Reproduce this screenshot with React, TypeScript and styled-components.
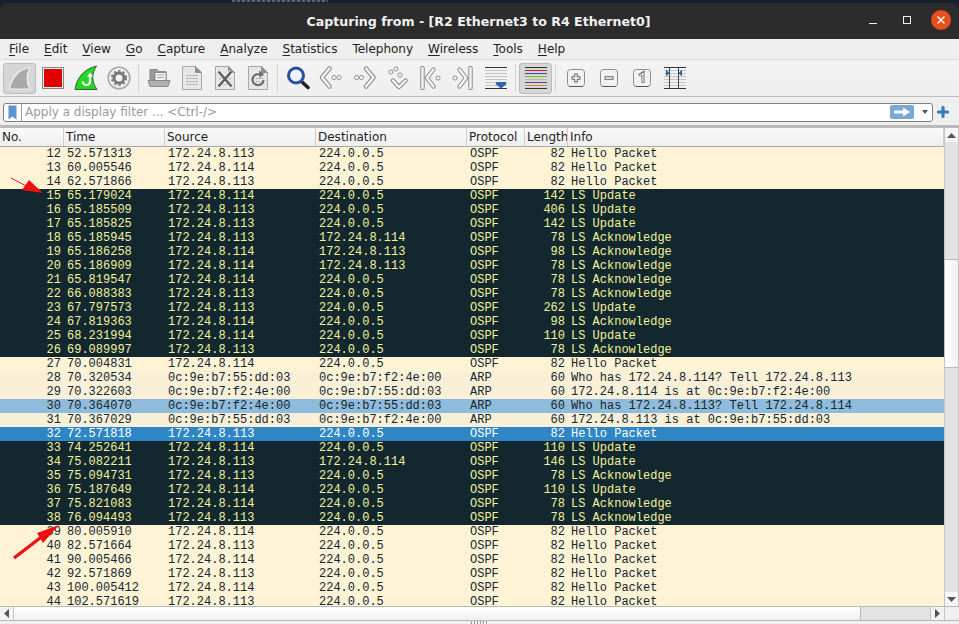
import React from "react";
import styled, { createGlobalStyle } from "styled-components";

const Global = createGlobalStyle`
  html, body { margin: 0; padding: 0; height: 100%; overflow: hidden; background: #f0f0f0; }
  #root { height: 100%; }
`;

const Window = styled.div`
  width: 959px;
  height: 624px;
  display: flex;
  flex-direction: column;
  overflow: hidden;
  position: relative;
  background: #efefef;
  font-family: "DejaVu Sans", sans-serif;
  color: #2e2e2e;
`;

const TitleStrip = styled.header`
  height: 39px;
  flex: none;
  box-sizing: border-box;
  padding-top: 3px;
  display: flex;
  background: #1a1f2e;
  position: relative;
`;

const BehindText = styled.div`
  position: absolute;
  left: 232px;
  top: 0;
  width: 96px;
  height: 2px;
  background: repeating-linear-gradient(90deg, #5d6272 0 3px, #2a2f3e 3px 5px);
`;

const TitleInner = styled.div`
  flex: 1;
  display: flex;
  align-items: center;
  justify-content: center;
  background: #2c2c2c;
  border-radius: 8px 8px 0 0;
`;

const Title = styled.div`
  font-weight: 700;
  font-size: 12.6px;
  color: #f2f2f2;
  margin-top: 1px;
  position: relative;
  left: -1px;
`;

const WinControls = styled.div`
  position: absolute;
  right: 8px;
  top: 10px;
  display: flex;
  align-items: center;
  gap: 14px;
`;

const WinButton = styled.div`
  width: 20px;
  height: 20px;
  display: flex;
  align-items: center;
  justify-content: center;
`;

const CloseButton = styled(WinButton)`
  background: #e6501f;
  border-radius: 50%;
`;

const MenuBar = styled.nav`
  height: 20px;
  flex: none;
  display: flex;
  align-items: center;
  padding-left: 9px;
  gap: 15px;
  background: #efefef;
  font-size: 12px;
  color: #222;
`;

const MenuItem = styled.span`
  & > u { text-underline-offset: 2px; text-decoration-thickness: 1px; }
`;

const ToolBar = styled.div`
  height: 38px;
  flex: none;
  box-sizing: border-box;
  display: flex;
  align-items: center;
  padding-left: 3px;
  background: linear-gradient(#f3f3f3, #efefef);
  border-top: 1px solid #dcdcdc;
  border-bottom: 1px solid #bdbdbd;
`;

const ToolButton = styled.div<{ $on?: boolean }>`
  width: 33px;
  height: 31px;
  flex: none;
  box-sizing: border-box;
  display: flex;
  align-items: center;
  justify-content: center;
  border-radius: 3px;
  background: ${(p) => (p.$on ? "#d6d6d6" : "transparent")};
  border: 1px solid ${(p) => (p.$on ? "#bcbcbc" : "transparent")};
`;

const ToolSep = styled.div`
  width: 1px;
  height: 28px;
  margin: 0 3px;
  flex: none;
  background: #d3d3d3;
`;

const FilterRow = styled.div`
  height: 28px;
  flex: none;
  box-sizing: border-box;
  display: flex;
  align-items: center;
  padding: 0 10px 0 3px;
  background: #efefef;
  gap: 4px;
`;

const FilterBox = styled.div`
  flex: 1;
  height: 19px;
  box-sizing: border-box;
  display: flex;
  align-items: center;
  background: #fff;
  border: 1px solid #7f7f7f;
  border-radius: 3px;
  margin-top: 2px;
`;

const Bookmark = styled.div`
  width: 18px;
  height: 100%;
  flex: none;
  box-sizing: border-box;
  border-right: 1px solid #9a9a9a;
  display: flex;
  align-items: center;
  justify-content: center;
`;

const FilterHint = styled.div`
  flex: 1;
  font-size: 12px;
  padding-left: 3px;
  color: #9b9b9b;
`;

const ApplyArrow = styled.div`
  width: 24px;
  height: 14px;
  border-radius: 2px;
  background: #7ba7d6;
  display: flex;
  align-items: center;
  justify-content: center;
`;

const DropCaret = styled.div`
  width: 0;
  height: 0;
  margin: 0 4px 0 8px;
  border-left: 3.5px solid transparent;
  border-right: 3.5px solid transparent;
  border-top: 4px solid #555;
`;

const AddFilter = styled.svg`
  margin-top: 2px;
  flex: none;
`;

const Frame = styled.div`
  height: 496px;
  flex: none;
  box-sizing: border-box;
  border-top: 3px solid #b9b9b9;
  display: grid;
  grid-template-columns: 944px 15px;
  grid-template-rows: 1fr 14px;
  border-bottom: 1px solid #b9b9b9;
`;

const Main = styled.div`
  display: flex;
  flex-direction: column;
  overflow: hidden;
  min-height: 0;
`;

const HeaderRow = styled.div`
  height: 19px;
  flex: none;
  box-sizing: border-box;
  display: grid;
  grid-template-columns: 64px 101px 151px 151px 58px 43px 1fr;
  background: linear-gradient(#fbfbfb, #eeeeee);
  border-bottom: 1px solid #a8a8a8;
  font-size: 12px;
  color: #1f1f1f;
`;

const HeaderCell = styled.div`
  box-sizing: border-box;
  padding-left: 2px;
  line-height: 18px;
  border-right: 1px solid #cfcfcf;
  white-space: nowrap;
  overflow: hidden;
`;

const Rows = styled.div`
  flex: 1;
  overflow: hidden;
  min-height: 0;
`;

const Row = styled.div<{ $bg: string; $fg: string }>`
  height: 14px;
  display: grid;
  grid-template-columns: 64px 101px 151px 151px 58px 43px 1fr;
  background: ${(p) => p.$bg};
  color: ${(p) => p.$fg};
  font-family: "Liberation Mono", monospace;
  font-size: 12px;
  line-height: 14px;
  white-space: pre;
`;

const Cell = styled.div`
  padding-left: 3px;
  overflow: hidden;
`;

const NumCell = styled.div`
  padding-right: 3px;
  text-align: right;
  overflow: hidden;
`;

const VScroll = styled.div`
  grid-row: 1 / 2;
  grid-column: 2;
  display: flex;
  flex-direction: column;
  background: #e3e3e3;
  border-left: 1px solid #c4c4c4;
  border-right: 1px solid #c4c4c4;
  min-height: 0;
`;

const ScrollBtn = styled.div`
  height: 14px;
  flex: none;
  background: #f6f6f6;
  display: flex;
  align-items: center;
  justify-content: center;
`;

const VTrack = styled.div<{ $h: number }>`
  height: ${(p) => p.$h}px;
  flex: none;
  background: #e3e3e3;
`;

const VThumb = styled.div<{ $h: number }>`
  height: ${(p) => p.$h}px;
  flex: none;
  box-sizing: border-box;
  background: linear-gradient(90deg, #ffffff, #f1f1f1);
  border-top: 1px solid #b9b9b9;
  border-bottom: 1px solid #b9b9b9;
`;

const VFill = styled.div`
  flex: 1;
  background: #e3e3e3;
`;

const HScroll = styled.div`
  grid-row: 2;
  grid-column: 1;
  display: flex;
  background: #e3e3e3;
  border-top: 1px solid #b9b9b9;
`;

const HBtn = styled.div`
  width: 13px;
  flex: none;
  background: #f4f4f4;
  display: flex;
  align-items: center;
  justify-content: center;
  border-right: 1px solid #c4c4c4;
`;

const HThumb = styled.div`
  width: 846px;
  flex: none;
  background: linear-gradient(#ffffff, #f0f0f0);
  border-right: 1px solid #b9b9b9;
`;

const HFill = styled.div`
  flex: 1;
`;

const HBtnEnd = styled(HBtn)`
  border-right: none;
  border-left: 1px solid #c4c4c4;
`;

const Corner = styled.div`
  grid-row: 2;
  grid-column: 2;
  background: #efefef;
  border-top: 1px solid #b9b9b9;
  border-left: 1px solid #c4c4c4;
`;

const ArrowOverlay = styled.svg`
  position: absolute;
  left: 0;
  top: 0;
  pointer-events: none;
`;

const Grip = styled.div`
  position: absolute;
  left: 471px;
  bottom: 0;
  width: 17px;
  height: 3px;
  background: repeating-linear-gradient(90deg, #9a9a9a 0 1px, transparent 1px 3px);
`;

type Kind = "o" | "d" | "a" | "b" | "s";
const palette: Record<Kind, [string, string]> = {
  o: ["#fff3d6", "#12272e"],
  d: ["#12272e", "#f4f29a"],
  a: ["#faf0d7", "#12272e"],
  b: ["#8fbbdc", "#12272e"],
  s: ["#2e86c4", "#ffffff"],
};

const A = "172.24.8.113";
const B = "172.24.8.114";
const M = "224.0.0.5";
const H = "Hello Packet";
const U = "LS Update";
const K = "LS Acknowledge";
const X = "0c:9e:b7:55:dd:03";
const Y = "0c:9e:b7:f2:4e:00";

const data: [number, string, string, string, string, number, string, Kind][] = [
  [12, "52.571313", A, M, "OSPF", 82, H, "o"],
  [13, "60.005546", B, M, "OSPF", 82, H, "o"],
  [14, "62.571866", A, M, "OSPF", 82, H, "o"],
  [15, "65.179024", B, M, "OSPF", 142, U, "d"],
  [16, "65.185509", A, M, "OSPF", 406, U, "d"],
  [17, "65.185825", A, M, "OSPF", 142, U, "d"],
  [18, "65.185945", A, B, "OSPF", 78, K, "d"],
  [19, "65.186258", B, A, "OSPF", 98, K, "d"],
  [20, "65.186909", B, A, "OSPF", 78, K, "d"],
  [21, "65.819547", B, M, "OSPF", 78, K, "d"],
  [22, "66.088383", A, M, "OSPF", 78, K, "d"],
  [23, "67.797573", A, M, "OSPF", 262, U, "d"],
  [24, "67.819363", B, M, "OSPF", 98, K, "d"],
  [25, "68.231994", B, M, "OSPF", 110, U, "d"],
  [26, "69.089997", A, M, "OSPF", 78, K, "d"],
  [27, "70.004831", B, M, "OSPF", 82, H, "o"],
  [28, "70.320534", X, Y, "ARP", 60, "Who has 172.24.8.114? Tell 172.24.8.113", "a"],
  [29, "70.322603", Y, X, "ARP", 60, "172.24.8.114 is at 0c:9e:b7:f2:4e:00", "a"],
  [30, "70.364070", Y, X, "ARP", 60, "Who has 172.24.8.113? Tell 172.24.8.114", "b"],
  [31, "70.367029", X, Y, "ARP", 60, "172.24.8.113 is at 0c:9e:b7:55:dd:03", "a"],
  [32, "72.571818", A, M, "OSPF", 82, H, "s"],
  [33, "74.252641", B, M, "OSPF", 110, U, "d"],
  [34, "75.082211", A, B, "OSPF", 146, U, "d"],
  [35, "75.094731", A, M, "OSPF", 78, K, "d"],
  [36, "75.187649", B, M, "OSPF", 110, U, "d"],
  [37, "75.821083", B, M, "OSPF", 78, K, "d"],
  [38, "76.094493", A, M, "OSPF", 78, K, "d"],
  [39, "80.005910", B, M, "OSPF", 82, H, "o"],
  [40, "82.571664", A, M, "OSPF", 82, H, "o"],
  [41, "90.005466", B, M, "OSPF", 82, H, "o"],
  [42, "92.571869", A, M, "OSPF", 82, H, "o"],
  [43, "100.005412", B, M, "OSPF", 82, H, "o"],
  [44, "102.571619", A, M, "OSPF", 82, H, "o"],
];

const menus: [string, string][] = [
  ["F", "ile"], ["E", "dit"], ["V", "iew"], ["G", "o"], ["C", "apture"], ["A", "nalyze"],
  ["S", "tatistics"], ["", "Telephony"], ["W", "ireless"], ["T", "ools"], ["H", "elp"],
];

const Doc = ({ children }: { children?: React.ReactNode }) => (
  <svg width="22" height="26" viewBox="0 0 22 26">
    <path d="M1.5 1.5H14.5L20.5 7.5V24.5H1.5Z" fill="#e6e6e6" stroke="#a8a8a8" />
    <path d="M14.5 1.5V7.5H20.5Z" fill="#8f8f8f" stroke="#8f8f8f" />
    {[10.5, 13.5, 16.5, 19.5].map((y) => (
      <path key={y} d={`M5.5 ${y}H16.5`} stroke="#a0a0a0" strokeDasharray="2 1" />
    ))}
    {children}
  </svg>
);

const Band = ({ d }: { d: string }) => (
  <>
    <path d={d} fill="none" stroke="#8a8a8a" strokeWidth="4.4" strokeLinejoin="round" strokeLinecap="round" />
    <path d={d} fill="none" stroke="#f6f6f6" strokeWidth="2.4" strokeLinejoin="round" strokeLinecap="round" />
  </>
);

const Dots = ({ pts }: { pts: [number, number][] }) => (
  <>
    {pts.map(([x, y]) => (
      <circle key={`${x}-${y}`} cx={x} cy={y} r="2.1" fill="#f4f4f4" stroke="#929292" />
    ))}
  </>
);

const Boxed = ({ children }: { children: React.ReactNode }) => (
  <svg width="20" height="20" viewBox="0 0 20 20">
    <rect x="1.5" y="1.5" width="17" height="17" rx="3" fill="#f2f2f2" stroke="#8c8c8c" />
    <path d="M3.5 18.5h13" stroke="#555" />
    {children}
  </svg>
);

const Lines = ({ children }: { children?: React.ReactNode }) => (
  <svg width="24" height="24" viewBox="0 0 24 24">
    <path d="M1 1.5H23M1 22.5H23" stroke="#333" />
    <path d="M1 4.5H23M1 7.5H23M1 10.5H23M1 13.5H23M1 16.5H23M1 19.5H23" stroke="#c4c4c4" />
    {children}
  </svg>
);

export default function App() {
  return (
    <>
      <Global />
      <Window>
        <TitleStrip>
          <BehindText />
          <TitleInner>
            <Title>Capturing from - [R2 Ethernet3 to R4 Ethernet0]</Title>
          </TitleInner>
          <WinControls>
            <WinButton>
              <svg width="10" height="10" viewBox="0 0 10 10"><path d="M1 8.5H9" stroke="#eee" /></svg>
            </WinButton>
            <WinButton>
              <svg width="10" height="10" viewBox="0 0 10 10"><rect x="1.5" y="1.5" width="7" height="7" fill="none" stroke="#eee" /></svg>
            </WinButton>
            <CloseButton>
              <svg width="10" height="10" viewBox="0 0 10 10"><path d="M1.5 1.5L8.5 8.5M8.5 1.5L1.5 8.5" stroke="#fff" strokeWidth="1.3" /></svg>
            </CloseButton>
          </WinControls>
        </TitleStrip>

        <MenuBar>
          {menus.map(([u, r]) => (
            <MenuItem key={u + r}><u>{u}</u>{r}</MenuItem>
          ))}
        </MenuBar>

        <ToolBar>
          <ToolButton $on>
            <svg width="24" height="24" viewBox="0 0 24 24">
              <path d="M1.5 23C3 13 10 3.5 22 1.5C18.5 8 18 15.5 22 23Z" fill="#a9a9a9" stroke="#f2f2f2" strokeWidth="1.2" />
            </svg>
          </ToolButton>
          <ToolButton>
            <svg width="22" height="22" viewBox="0 0 22 22">
              <rect x="0.5" y="0.5" width="21" height="21" fill="#efefef" stroke="#888" />
              <rect x="2" y="2" width="18" height="18" fill="#e00000" />
            </svg>
          </ToolButton>
          <ToolButton>
            <svg width="24" height="26" viewBox="0 0 24 26">
              <path d="M1 24.5C2.5 13 10 4 22.5 1C17.5 8.5 17.5 16.5 23 24.5Z" fill="#22d822" stroke="#3c5c3c" strokeWidth="1" />
              <path d="M16 10.5V16.5A3.6 3.6 0 0 1 8.8 16.5" fill="none" stroke="#fff" strokeWidth="2.2" />
              <path d="M13 11.5L16 7.5L19 11.5Z" fill="#fff" />
            </svg>
          </ToolButton>
          <ToolButton>
            <svg width="24" height="24" viewBox="0 0 24 24">
              <circle cx="12" cy="12" r="10.8" fill="#f4f4f4" stroke="#a8a8a8" strokeWidth="1.6" />
              <circle cx="12" cy="12" r="5" fill="none" stroke="#777" strokeWidth="3" />
              <circle cx="12" cy="12" r="7.2" fill="none" stroke="#777" strokeWidth="1.8" strokeDasharray="2.4 2.3" />
            </svg>
          </ToolButton>
          <ToolSep />
          <ToolButton>
            <svg width="24" height="22" viewBox="0 0 24 22">
              <path d="M3 13V2.5H10L12 4.5H19V13Z" fill="#999" stroke="#888" />
              <rect x="8" y="5.5" width="11" height="8" fill="#f4f4f4" stroke="#8a8a8a" />
              <path d="M10 8H17M10 10.5H17" stroke="#aaa" />
              <path d="M1 13.5H23L21 19.5H3Z" fill="#b0b0b0" stroke="#8a8a8a" />
            </svg>
          </ToolButton>
          <ToolButton><Doc /></ToolButton>
          <ToolButton>
            <Doc>
              <path d="M4.5 6.5L17.5 21.5M17.5 6.5L4.5 21.5" stroke="#f4f4f4" strokeWidth="4.4" />
              <path d="M4.5 6.5L17.5 21.5M17.5 6.5L4.5 21.5" stroke="#606060" strokeWidth="2.6" />
            </Doc>
          </ToolButton>
          <ToolButton>
            <Doc>
              <path d="M16.5 15A5.5 5.5 0 1 1 13 9.5" fill="none" stroke="#f4f4f4" strokeWidth="4.2" />
              <path d="M16.5 15A5.5 5.5 0 1 1 13 9.5" fill="none" stroke="#6e6e6e" strokeWidth="2.4" />
              <path d="M12 5.5L17 9L12.5 13Z" fill="#6e6e6e" />
            </Doc>
          </ToolButton>
          <ToolSep />
          <ToolButton>
            <svg width="24" height="24" viewBox="0 0 24 24">
              <path d="M15 15L22 21.5" stroke="#222" strokeWidth="3.6" strokeLinecap="round" />
              <circle cx="10" cy="9.5" r="7.5" fill="#eef3fa" stroke="#2d4fa1" strokeWidth="3" />
            </svg>
          </ToolButton>
          <ToolButton>
            <svg width="24" height="24" viewBox="0 0 24 24">
              <Band d="M10.5 2.5L3 11.5L10.5 20.5" />
              <Dots pts={[[15, 11.5], [20, 11.5]]} />
            </svg>
          </ToolButton>
          <ToolButton>
            <svg width="24" height="24" viewBox="0 0 24 24">
              <Band d="M14 2.5L21.5 11.5L14 20.5" />
              <Dots pts={[[4.5, 11.5], [9.5, 11.5]]} />
            </svg>
          </ToolButton>
          <ToolButton>
            <svg width="24" height="24" viewBox="0 0 24 24">
              <Band d="M8 14.5L14 21L20.5 14.5" />
              <Dots pts={[[6, 6], [11, 3], [15, 9]]} />
            </svg>
          </ToolButton>
          <ToolButton>
            <svg width="24" height="24" viewBox="0 0 24 24">
              <Band d="M4.5 2V22" />
              <Band d="M15.5 3.5L9 12L15.5 20.5" />
              <Dots pts={[[20, 12]]} />
            </svg>
          </ToolButton>
          <ToolButton>
            <svg width="24" height="24" viewBox="0 0 24 24">
              <Band d="M19.5 2V22" />
              <Band d="M8.5 3.5L15 12L8.5 20.5" />
              <Dots pts={[[4, 12]]} />
            </svg>
          </ToolButton>
          <ToolButton>
            <Lines>
              <path d="M11 17.5H23L17 22.5Z" fill="#2f65b0" />
              <path d="M12 16H22V18H12Z" fill="#2f65b0" />
            </Lines>
          </ToolButton>
          <ToolSep />
          <ToolButton $on>
            <svg width="24" height="24" viewBox="0 0 24 24">
              <path d="M1 1.5H23M1 22.5H23" stroke="#333" />
              <path d="M1 4.5H23" stroke="#e21c1c" />
              <path d="M1 7.5H23" stroke="#2b4fb0" />
              <path d="M1 10.5H23" stroke="#7ac510" />
              <path d="M1 13.5H23" stroke="#b8b8b8" />
              <path d="M1 16.5H23" stroke="#6a3aa0" />
              <path d="M1 19.5H23" stroke="#c89a20" />
            </svg>
          </ToolButton>
          <ToolSep />
          <ToolButton>
            <Boxed><path d="M10 5.5V14.5M5.5 10H14.5" stroke="#666" strokeWidth="3.6" /><path d="M10 6.5V13.5M6.5 10H13.5" stroke="#f6f6f6" strokeWidth="1.6" /></Boxed>
          </ToolButton>
          <ToolButton>
            <Boxed><path d="M5.5 10H14.5" stroke="#666" strokeWidth="3.6" /><path d="M6.5 10H13.5" stroke="#f6f6f6" strokeWidth="1.6" /></Boxed>
          </ToolButton>
          <ToolButton>
            <Boxed><path d="M7 7.5L11 5V15" fill="none" stroke="#666" strokeWidth="3" /><path d="M7.5 7.5L11 5.5V14.5" fill="none" stroke="#f6f6f6" strokeWidth="1.2" /></Boxed>
          </ToolButton>
          <ToolButton>
            <Lines>
              <path d="M6.5 1V23M15.5 1V23" stroke="#444" />
              <path d="M3 3.5V10.5L6.5 7ZM19 3.5V10.5L15.5 7Z" fill="#2f65b0" />
            </Lines>
          </ToolButton>
        </ToolBar>

        <FilterRow>
          <FilterBox>
            <Bookmark>
              <svg width="9" height="15" viewBox="0 0 9 15"><path d="M0.5 0.5H8.5V14.5L4.5 11.5L0.5 14.5Z" fill="#5c93d2" /></svg>
            </Bookmark>
            <FilterHint>Apply a display filter ... &lt;Ctrl-/&gt;</FilterHint>
            <ApplyArrow>
              <svg width="16" height="10" viewBox="0 0 16 10"><path d="M0 3.5H9V0.5L16 5L9 9.5V6.5H0Z" fill="#fff" /></svg>
            </ApplyArrow>
            <DropCaret />
          </FilterBox>
          <AddFilter width="12" height="12" viewBox="0 0 12 12">
            <path d="M6 1.5V10.5M1.5 6H10.5" stroke="#3f77b8" strokeWidth="3.2" strokeLinecap="round" />
          </AddFilter>
        </FilterRow>

        <Frame>
          <Main>
            <HeaderRow>
              {["No.", "Time", "Source", "Destination", "Protocol", "Length", "Info"].map((h) => (
                <HeaderCell key={h}>{h}</HeaderCell>
              ))}
            </HeaderRow>
            <Rows>
              {data.map(([no, t, s, d, p, l, info, k]) => (
                <Row key={no} $bg={palette[k][0]} $fg={palette[k][1]}>
                  <NumCell>{no}</NumCell>
                  <Cell>{t}</Cell>
                  <Cell>{s}</Cell>
                  <Cell>{d}</Cell>
                  <Cell>{p}</Cell>
                  <NumCell>{l}</NumCell>
                  <Cell>{info}</Cell>
                </Row>
              ))}
            </Rows>
          </Main>
          <VScroll>
            <ScrollBtn>
              <svg width="9" height="5" viewBox="0 0 9 5"><path d="M0 5H9L4.5 0Z" fill="#555" /></svg>
            </ScrollBtn>
            <VTrack $h={117} />
            <VThumb $h={109} />
            <VFill />
            <ScrollBtn>
              <svg width="9" height="5" viewBox="0 0 9 5"><path d="M0 0H9L4.5 5Z" fill="#555" /></svg>
            </ScrollBtn>
          </VScroll>
          <HScroll>
            <HBtn>
              <svg width="5" height="9" viewBox="0 0 5 9"><path d="M5 0V9L0 4.5Z" fill="#555" /></svg>
            </HBtn>
            <HThumb />
            <HFill />
            <HBtnEnd>
              <svg width="5" height="9" viewBox="0 0 5 9"><path d="M0 0V9L5 4.5Z" fill="#555" /></svg>
            </HBtnEnd>
          </HScroll>
          <Corner />
        </Frame>

        <ArrowOverlay width="959" height="624" viewBox="0 0 959 624">
          <path d="M11 178L28 187" stroke="#ee1111" strokeWidth="1" />
          <path d="M43 193L22 190L29 180Z" fill="#ee1111" />
          <path d="M14 558L44 535" stroke="#ee1111" strokeWidth="3.4" />
          <path d="M59 525L37 533L43 543Z" fill="#ee1111" />
        </ArrowOverlay>
        <Grip />
      </Window>
    </>
  );
}
